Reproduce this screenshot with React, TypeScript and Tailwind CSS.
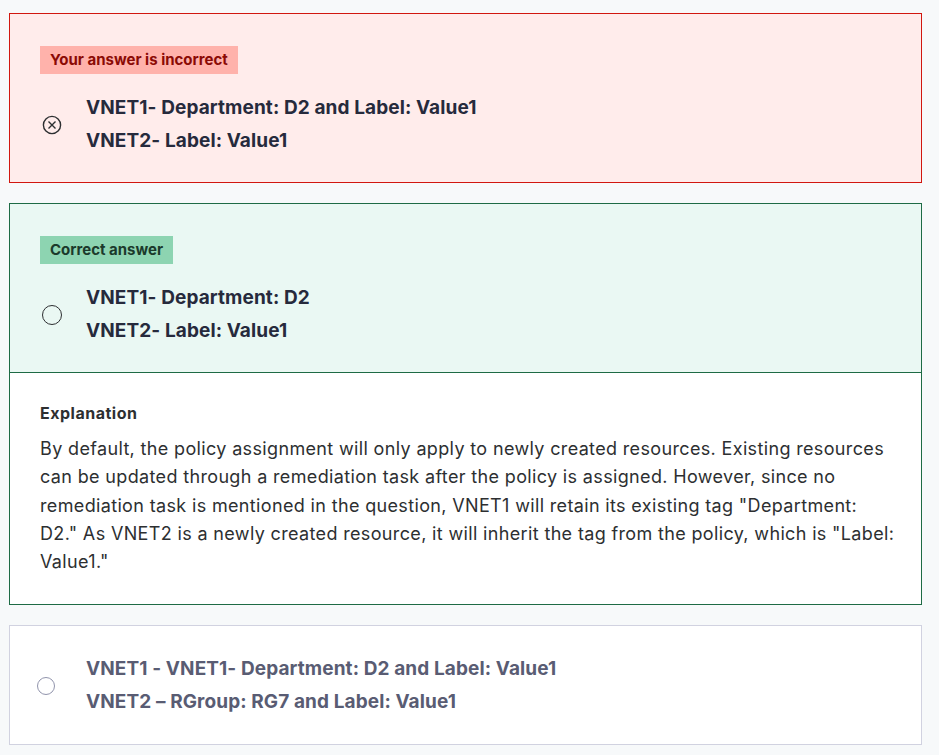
import React from "react";

const font = { fontFamily: "Inter, 'Noto Sans', sans-serif" };

function CrossIcon() {
  return (
    <svg width="20" height="20" viewBox="0 0 20 20" fill="none" stroke="#2d2f31" strokeWidth="1.4">
      <circle cx="10" cy="10" r="8.6" />
      <path d="M6.5 6.5 L13.5 13.5 M13.5 6.5 L6.5 13.5" />
    </svg>
  );
}

function Radio({ grey }: { grey?: boolean }) {
  return (
    <span
      className={
        "block rounded-full border-[1.5px] " +
        (grey ? "w-[18px] h-[18px] border-[#9194ac]" : "w-[20px] h-[20px] border-[#2d2f31]")
      }
    />
  );
}

function AnswerLines({ lines, muted }: { lines: string[]; muted?: boolean }) {
  return (
    <div
      className={
        "flex flex-col gap-[9px] text-[19px] font-bold tracking-[0.1px] " +
        (muted ? "text-[#595c73]" : "text-[#262a3c]")
      }
    >
      {lines.map(l => (
        <div key={l} className="leading-[24px]">{l}</div>
      ))}
    </div>
  );
}

export default function App() {
  return (
    <div className="min-h-[755px] bg-[#f7f9fa] pt-[13px] pl-[9px] pr-[17px]" style={font}>
      <div className="border border-[#d1170f] bg-[#ffeceb] pt-[32px] pb-[29px] pl-[30px]">
        <span className="inline-block bg-[#ffb2ab] text-[#8b0a05] text-[15px] font-bold px-[10px] py-[5px] leading-[18px]">
          Your answer is incorrect
        </span>
        <div className="flex items-center mt-[22px]">
          <div className="w-[46px] pl-[2px]">
            <CrossIcon />
          </div>
          <AnswerLines lines={["VNET1- Department: D2 and Label: Value1", "VNET2- Label: Value1"]} />
        </div>
      </div>

      <div className="mt-[20px] border border-[#1e6b45]">
        <div className="bg-[#eaf8f3] pt-[32px] pb-[29px] pl-[30px] border-b border-[#1e6b45]">
          <span className="inline-block bg-[#8dd4b1] text-[#1b3a2b] text-[15px] font-bold px-[10px] py-[5px] leading-[18px]">
            Correct answer
          </span>
          <div className="flex items-center mt-[22px]">
            <div className="w-[46px] pl-[2px]">
              <Radio />
            </div>
            <AnswerLines lines={["VNET1- Department: D2", "VNET2- Label: Value1"]} />
          </div>
        </div>
        <div className="bg-white pt-[28px] pb-[28px] pl-[30px] pr-[20px] text-[#2d2f31]">
          <div className="text-[16px] font-bold leading-[24px] tracking-[0.5px]">Explanation</div>
          <p className="mt-[10px] text-[18px] leading-[28.25px] tracking-[0.35px] whitespace-nowrap">
            By default, the policy assignment will only apply to newly created resources. Existing resources
            <br />
            can be updated through a remediation task after the policy is assigned. However, since no
            <br />
            remediation task is mentioned in the question, VNET1 will retain its existing tag "Department:
            <br />
            D2." As VNET2 is a newly created resource, it will inherit the tag from the policy, which is "Label:
            <br />
            Value1."
          </p>
        </div>
      </div>

      <div className="mt-[20px] border border-[#d1d2e0] bg-white pt-[31px] pb-[30px] pl-[27px] flex items-center">
        <div className="w-[49px]">
          <Radio grey />
        </div>
        <AnswerLines muted lines={["VNET1 - VNET1- Department: D2 and Label: Value1", "VNET2 – RGroup: RG7 and Label: Value1"]} />
      </div>
    </div>
  );
}
